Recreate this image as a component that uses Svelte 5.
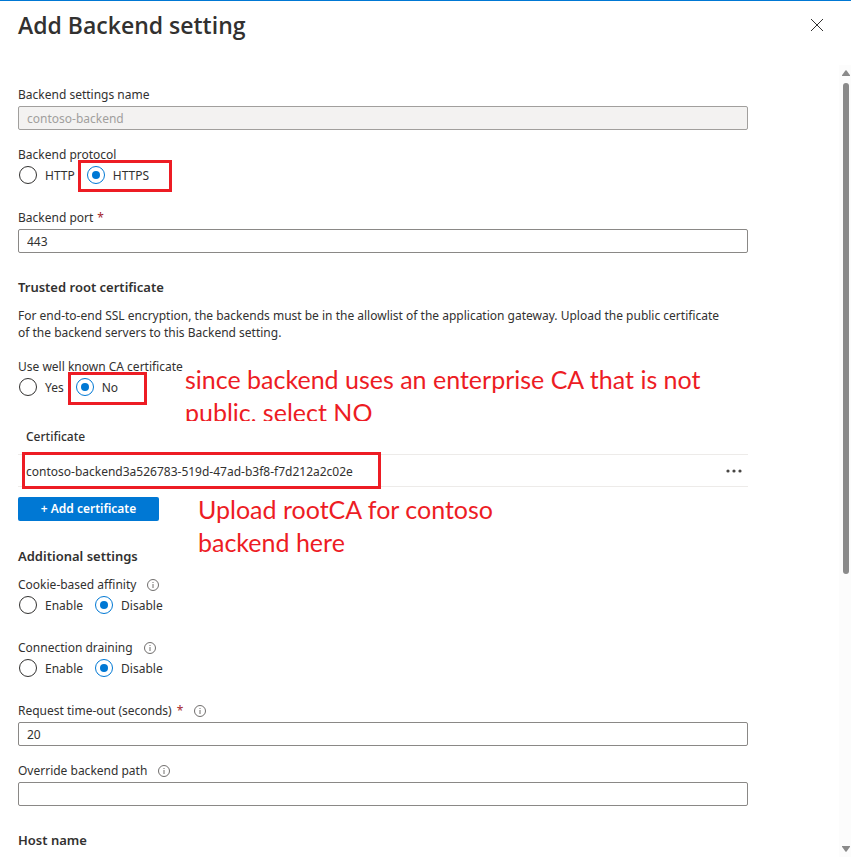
<script>
  let protocol = $state('HTTPS');
  let knownCa = $state('No');
  let affinity = $state('Disable');
  let draining = $state('Disable');
  let name = $state('contoso-backend');
  let port = $state('443');
  let timeout = $state('20');
  let path = $state('');
</script>

{#snippet info(about)}
  <button type="button" class="info" aria-label={about}>
    <svg width="12" height="12" viewBox="0 0 12 12" fill="none" stroke="#605e5c">
      <circle cx="6" cy="6" r="5.5" stroke-width="0.9" />
      <path d="M6 5v4M6 3v1" stroke-width="0.9" />
    </svg>
  </button>
{/snippet}

<div class="panel">
  <header>
    <h1>Add Backend setting</h1>
    <button type="button" class="close" aria-label="Close">
      <svg width="14" height="14" viewBox="0 0 14 14" fill="none" stroke="#323130" stroke-width="1">
        <path d="M1 1l12 12M13 1L1 13" />
      </svg>
    </button>
  </header>

  <div class="body">
    <form>
      <div class="field">
        <label for="name">Backend settings name</label>
        <input id="name" class="text" type="text" bind:value={name} disabled />
      </div>

      <fieldset class="field">
        <legend>Backend protocol</legend>
        <div class="options">
          <label><input type="radio" name="protocol" value="HTTP" bind:group={protocol} />HTTP</label>
          <label class="marked">
            <input type="radio" name="protocol" value="HTTPS" bind:group={protocol} />HTTPS
            <span class="mark protocol-mark"></span>
          </label>
        </div>
      </fieldset>

      <div class="field">
        <label for="port">Backend port <span class="required">*</span></label>
        <input id="port" class="text" type="text" bind:value={port} />
      </div>

      <h2>Trusted root certificate</h2>
      <p class="intro">
        For end-to-end SSL encryption, the backends must be in the allowlist of the application gateway. Upload the
        public certificate of the backend servers to this Backend setting.
      </p>

      <fieldset class="field marked">
        <legend>Use well known CA certificate</legend>
        <div class="options">
          <label><input type="radio" name="ca" value="Yes" bind:group={knownCa} />Yes</label>
          <label class="marked">
            <input type="radio" name="ca" value="No" bind:group={knownCa} />No
            <span class="mark ca-mark"></span>
          </label>
        </div>
        <div class="note ca-note">since backend uses an enterprise CA that is not public, select NO</div>
      </fieldset>

      <div class="marked certificates">
        <table>
          <thead>
            <tr><th>Certificate</th><th class="menu" aria-label="Actions"></th></tr>
          </thead>
          <tbody>
            <tr>
              <td>contoso-backend3a526783-519d-47ad-b3f8-f7d212a2c02e</td>
              <td class="menu">
                <button type="button" class="more" aria-label="More actions">
                  <svg width="18" height="4" viewBox="0 0 18 4" fill="#484644">
                    <circle cx="3" cy="2" r="1.6" /><circle cx="9" cy="2" r="1.6" /><circle cx="15" cy="2" r="1.6" />
                  </svg>
                </button>
              </td>
            </tr>
          </tbody>
        </table>
        <span class="mark row-mark"></span>
        <button type="button" class="add">+ Add certificate</button>
        <div class="note upload-note">Upload rootCA for contoso<br />backend here</div>
      </div>

      <h2>Additional settings</h2>
      <fieldset class="field first">
        <legend>Cookie-based affinity {@render info('About cookie-based affinity')}</legend>
        <div class="options">
          <label><input type="radio" name="affinity" value="Enable" bind:group={affinity} />Enable</label>
          <label><input type="radio" name="affinity" value="Disable" bind:group={affinity} />Disable</label>
        </div>
      </fieldset>

      <fieldset class="field">
        <legend>Connection draining {@render info('About connection draining')}</legend>
        <div class="options">
          <label><input type="radio" name="draining" value="Enable" bind:group={draining} />Enable</label>
          <label><input type="radio" name="draining" value="Disable" bind:group={draining} />Disable</label>
        </div>
      </fieldset>

      <div class="field">
        <div class="caption">
          <label for="timeout">Request time-out (seconds) <span class="required">*</span></label>
          {@render info('About request time-out')}
        </div>
        <input id="timeout" class="text" type="text" bind:value={timeout} />
      </div>

      <div class="field">
        <div class="caption">
          <label for="path">Override backend path</label>
          {@render info('About override backend path')}
        </div>
        <input id="path" class="text" type="text" bind:value={path} />
      </div>

      <h2>Host name</h2>
    </form>

    <div class="scrollbar" aria-hidden="true">
      <svg width="8" height="6" viewBox="0 0 8 6" fill="#8a8a8a"><path d="M3.4.5Q4 0 4.6.5L8 5.2V6H0v-.8z" /></svg>
      <div class="track"><div class="thumb"></div></div>
      <svg width="8" height="6" viewBox="0 0 8 6" fill="#8a8a8a"><path d="M3.4 5.5Q4 6 4.6 5.5L8 .8V0H0v.8z" /></svg>
    </div>
  </div>
</div>

<style>
  :global(body) {
    background: #fff;
  }

  .panel {
    box-sizing: border-box;
    height: 100vh;
    display: flex;
    flex-direction: column;
    border-top: 1px solid #0078d4;
    overflow: hidden;
    color: #323130;
    font: 12px/18px 'Noto Sans', 'Open Sans', sans-serif;
  }

  header {
    display: flex;
    justify-content: space-between;
    align-items: flex-start;
    height: 64px;
    flex: none;
    box-sizing: border-box;
    padding: 8px 27px 0 18px;
  }

  h1 {
    margin: 0;
    font-family: 'Open Sans', sans-serif;
    font-size: 23px;
    line-height: 32px;
    font-weight: 600;
  }

  button {
    border: 0;
    padding: 0;
    background: none;
    font: inherit;
    cursor: pointer;
  }

  svg {
    display: block;
  }

  .close {
    padding: 9px 0;
  }

  .body {
    flex: 1;
    min-height: 0;
    display: flex;
  }

  form {
    flex: 1;
    min-width: 0;
    overflow-y: auto;
    scrollbar-width: none;
    padding: 5px 91px 0 18px;
  }

  .field {
    border: 0;
    margin: 15px 0 0;
    padding: 0;
    min-width: 0;
  }

  fieldset + .field {
    margin-top: 24px;
  }

  .field.first {
    margin-top: 10px;
  }

  .marked {
    position: relative;
  }

  .field > label,
  legend,
  .caption {
    display: flex;
    align-items: center;
    gap: 4px;
    box-sizing: border-box;
    height: 18px;
    padding: 2px 0 0;
    margin-bottom: 3px;
  }

  .required {
    color: #a4262c;
  }

  .caption .required {
    margin-left: 2px;
  }

  .info {
    margin-left: 7px;
  }

  .text {
    display: block;
    box-sizing: border-box;
    width: 100%;
    height: 24px;
    border: 1px solid #8a8886;
    border-radius: 2px;
    padding: 0 8px;
    background: #fff;
    color: #323130;
    font: inherit;
  }

  .text:disabled {
    background: #f3f2f1;
    border-color: #a19f9d;
    color: #a19f9d;
  }

  .options {
    display: flex;
    gap: 11px;
    height: 18px;
  }

  .options label {
    display: flex;
    align-items: flex-start;
    gap: 8px;
    line-height: 20px;
  }

  input[type='radio'] {
    appearance: none;
    box-sizing: border-box;
    width: 18px;
    height: 18px;
    margin: 0 0 0 1px;
    border: 1px solid #323130;
    border-radius: 50%;
    display: grid;
    place-items: center;
  }

  input[type='radio']:checked {
    border-color: #0078d4;
  }

  input[type='radio']:checked::before {
    content: '';
    width: 8px;
    height: 8px;
    border-radius: 50%;
    background: #0078d4;
  }

  h2 {
    margin: 26px 0 0;
    font-size: 13px;
    line-height: 18px;
    font-weight: 600;
  }

  .field + h2 {
    margin-top: 25px;
  }

  .intro {
    margin: 11px 0 16px;
    padding-right: 20px;
    line-height: 17px;
  }

  .certificates {
    margin-top: 22px;
  }

  table {
    width: 100%;
    border-collapse: separate;
    border-spacing: 0;
    margin-bottom: 10px;
  }

  th,
  td {
    box-sizing: border-box;
    padding: 2px 8px 0;
    text-align: left;
    border-bottom: 1px solid #edebe9;
  }

  th {
    height: 37px;
    font-weight: 500;
  }

  td {
    height: 32px;
  }

  .menu {
    width: 40px;
    padding: 0 5px 0 0;
  }

  .more {
    display: block;
    margin-left: auto;
    padding: 6px 0;
  }

  .add {
    display: block;
    width: 141px;
    height: 24px;
    border-radius: 2px;
    background: #0078d4;
    color: #fff;
    font-weight: 600;
  }

  .mark {
    position: absolute;
    box-sizing: border-box;
    border: 3px solid #ed1c24;
    pointer-events: none;
  }

  .protocol-mark {
    left: -8px;
    top: -6px;
    width: 94px;
    height: 32px;
  }

  .ca-mark {
    left: -7px;
    top: -6px;
    width: 79px;
    height: 33px;
  }

  .row-mark {
    left: 4px;
    top: 34px;
    width: 359px;
    height: 37px;
  }

  .note {
    position: absolute;
    color: #ed1c24;
    font: 25px/33px Lato, sans-serif;
  }

  .ca-note {
    left: 167px;
    top: -15px;
    width: 530px;
    height: 58px;
    overflow: hidden;
  }

  .upload-note {
    left: 180px;
    top: 75px;
    white-space: nowrap;
  }

  .scrollbar {
    width: 12px;
    flex: none;
    display: flex;
    flex-direction: column;
    align-items: center;
    gap: 7px;
    box-sizing: border-box;
    padding: 5px 0 5px 2px;
    background: #fcfcfc;
  }

  .track {
    flex: 1;
  }

  .thumb {
    width: 6px;
    height: 65%;
    border-radius: 3px;
    background: #8a8a8a;
  }
</style>
